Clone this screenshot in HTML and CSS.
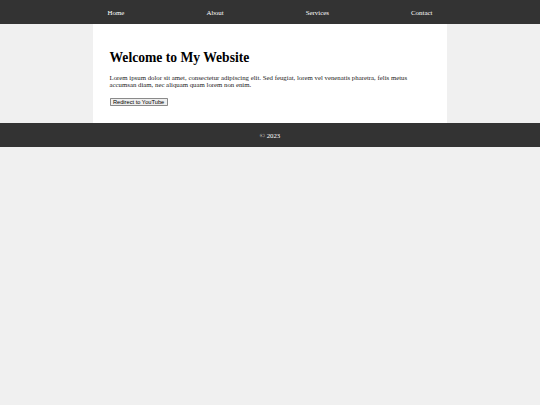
FILE: index.html
```html
<!DOCTYPE html>
<html>
<head>
<meta charset="utf-8">
<link rel="stylesheet" href="styles.css">
</head>
<body>
<header class="site-header">
  <nav class="nav">
    <a href="#" class="nav-link">Home</a>
    <a href="#" class="nav-link">About</a>
    <a href="#" class="nav-link">Services</a>
    <a href="#" class="nav-link">Contact</a>
  </nav>
</header>
<main class="container">
  <h1 class="title">Welcome to My Website</h1>
  <p class="text">Lorem ipsum dolor sit amet, consectetur adipiscing elit. Sed feugiat, lorem vel venenatis pharetra, felis metus accumsan diam, nec aliquam quam lorem non enim.</p>
  <button class="btn">Redirect to YouTube</button>
</main>
<footer class="site-footer">
  <p class="copy">&copy; 2023</p>
</footer>
</body>
</html>
```

FILE: styles.css
```css
html, body {
  margin: 0;
  padding: 0;
}
body {
  background: #f0f0f0;
  font-family: "Liberation Serif", "Times New Roman", serif;
  font-size: 6.8px;
  color: #000;
}
.site-header {
  background: #333;
  height: 24px;
  display: flex;
  align-items: center;
  justify-content: center;
}
.nav {
  display: flex;
  gap: 82px;
  justify-content: center;
}
.nav-link {
  color: #fff;
  text-decoration: none;
  font-size: 6.9px;
}
.container {
  background: #fff;
  width: 321px;
  margin: 0 auto;
  padding: 17px 16.5px 17px;
}
.title {
  font-size: 13.6px;
  margin: 0 0 8.6px;
  padding-top: 9px;
  line-height: 1.12;
}
.text {
  margin: 0 0 9.2px;
  font-size: 6.8px;
  line-height: 7.4px;
  color: #1a1a1a;
}
.btn {
  font-family: "Liberation Sans", Arial, sans-serif;
  font-size: 5.7px;
  padding: 0.6px 2.4px;
  height: 8.4px;
  line-height: 6px;
  border: 0.8px solid #8a8a8a;
  background: #efefef;
  color: #000;
  border-radius: 0.8px;
  display: block;
}
.site-footer {
  background: #333;
  height: 24px;
  display: flex;
  align-items: center;
  justify-content: center;
}
.copy {
  margin: 0;
  color: #fff;
  font-size: 6.8px;
}
```
